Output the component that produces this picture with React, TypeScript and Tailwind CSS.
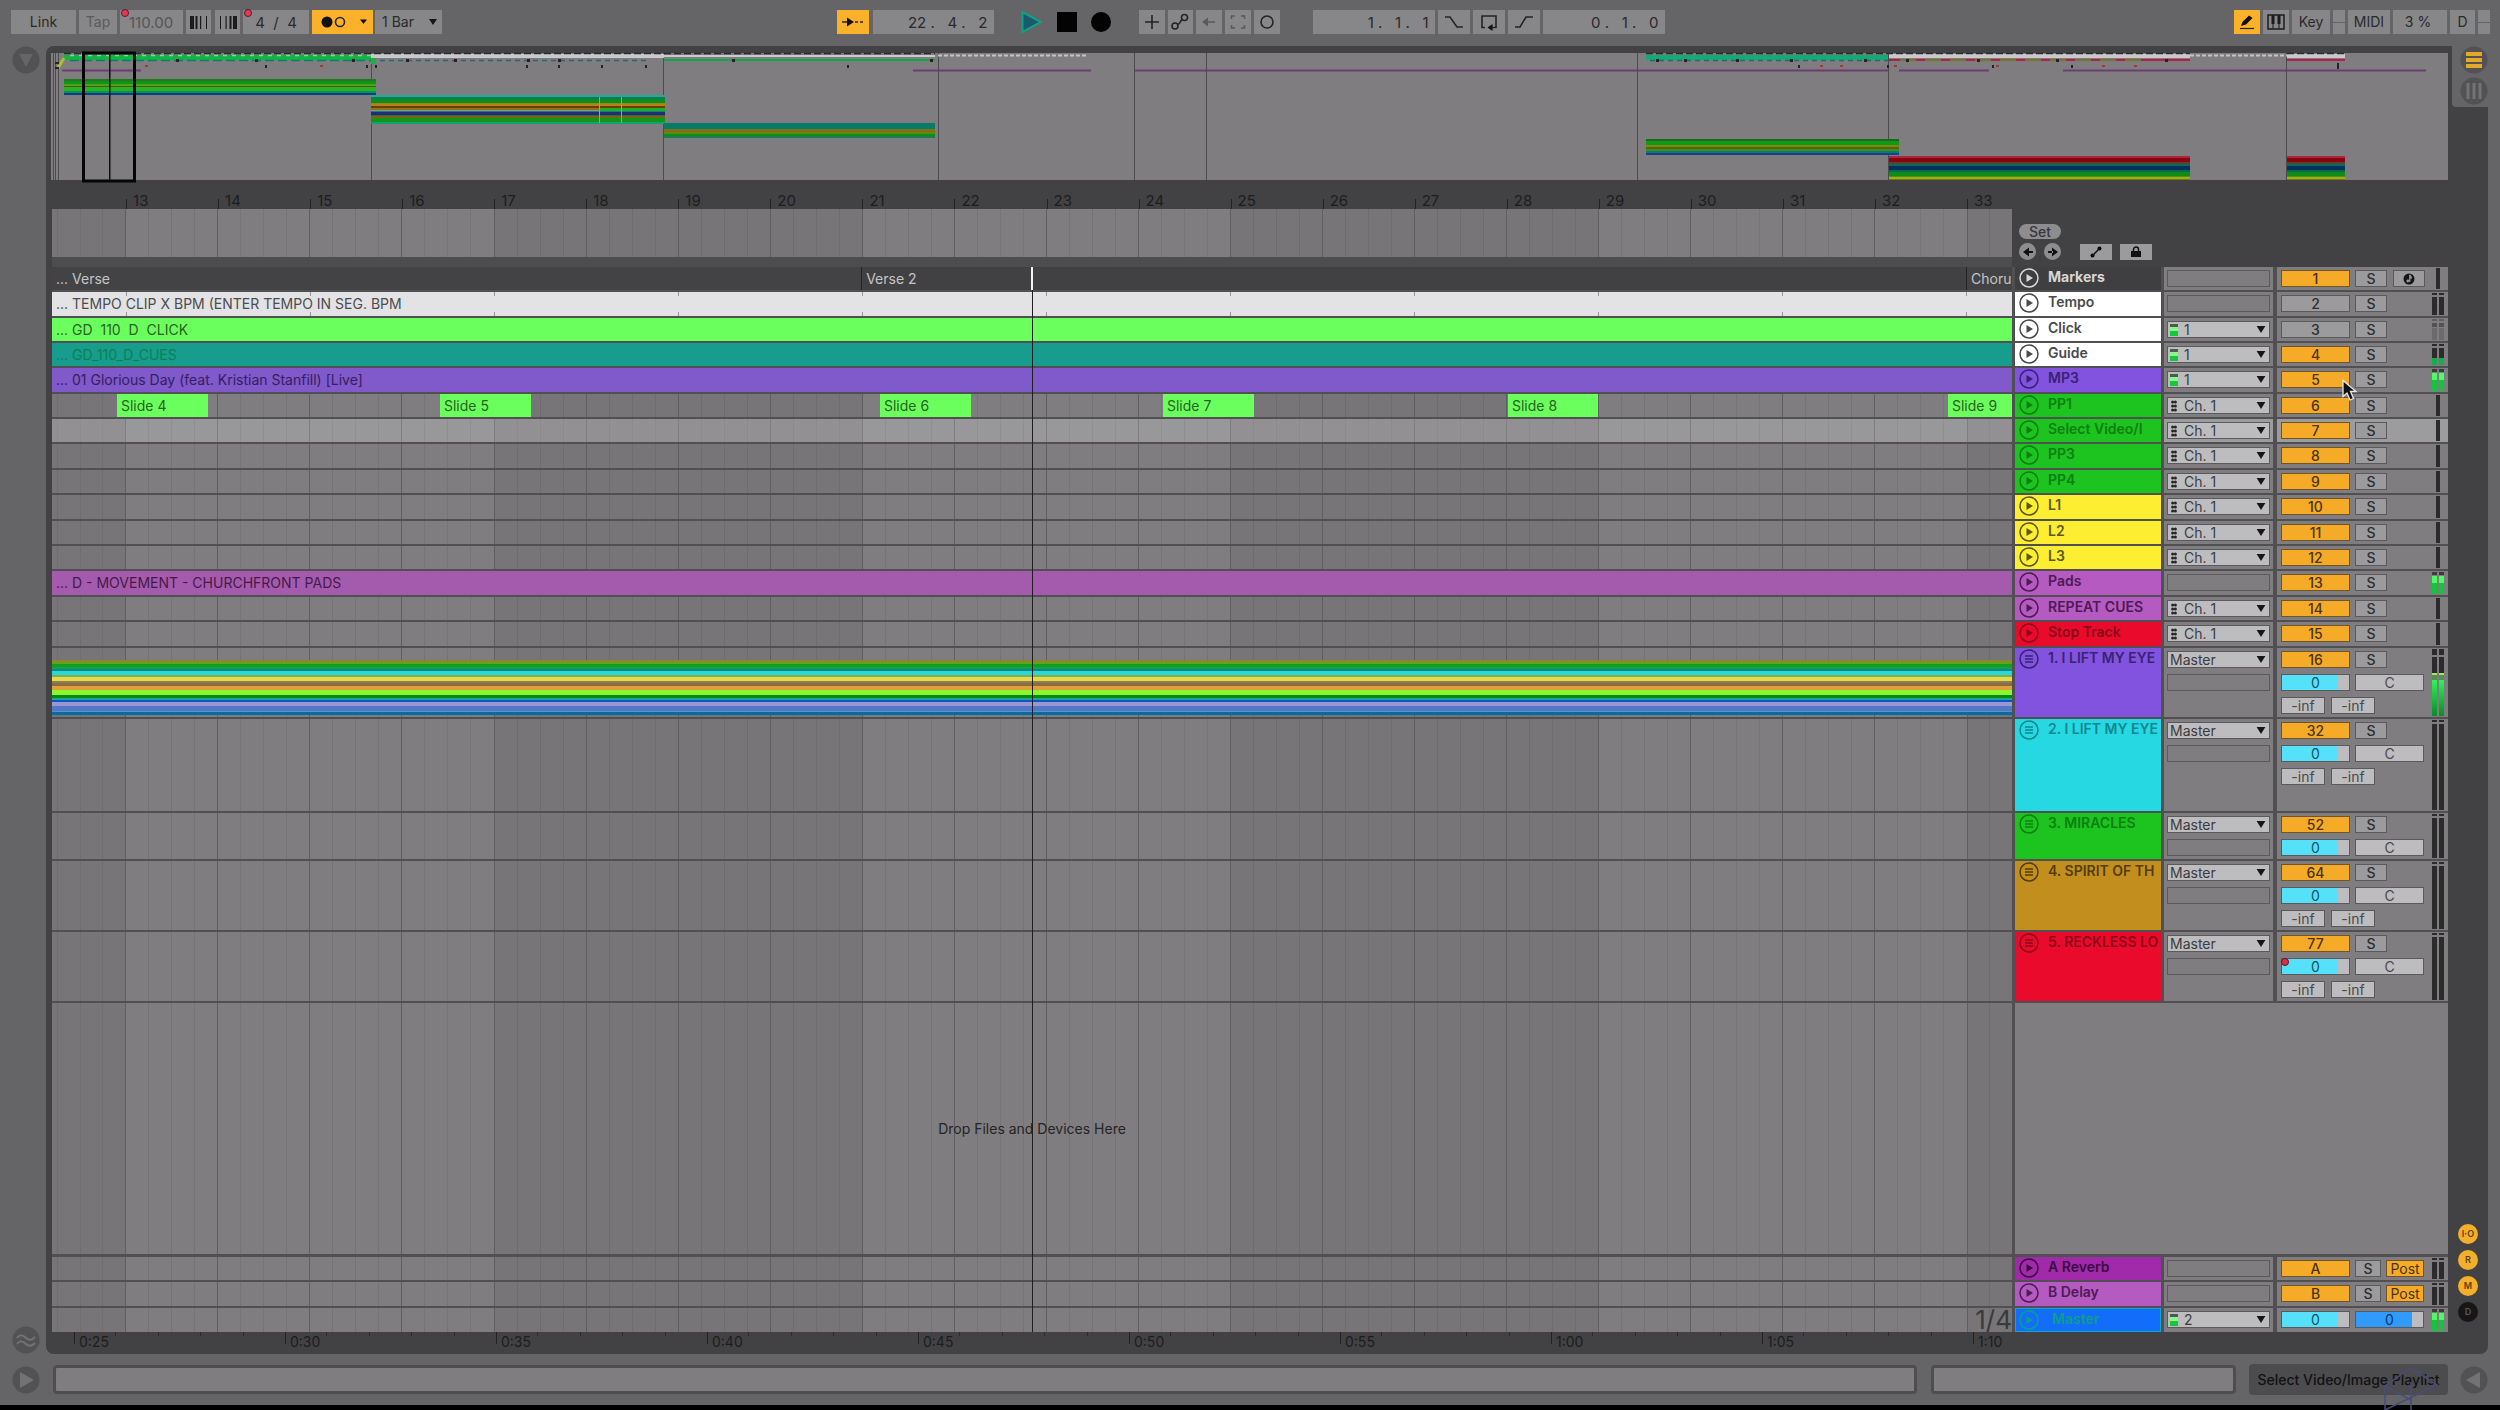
import React from "react";

type Tone = { bg: string; text: string };
type Meter = "line" | "dual" | "faint" | "low" | "high" | "group";

type Track = {
  name: string;
  tone: Tone;
  height: string;
  io: "none" | "audio" | "midi" | "group";
  number: string;
  active?: boolean;
  meter: Meter;
  selected?: boolean;
  sends?: boolean;
  automated?: boolean;
  icon: "play" | "group";
};

const tones: Record<string, Tone> = {
  dark: { bg: "bg-[#3f3f41]", text: "text-[#d6d6d6]" },
  white: { bg: "bg-white", text: "text-[#4a4a4c]" },
  purple: { bg: "bg-[#8253de]", text: "text-[#3a2272]" },
  green: { bg: "bg-[#1dc41f]", text: "text-[#0d7f13]" },
  yellow: { bg: "bg-[#fdee32]", text: "text-[#5c5716]" },
  pink: { bg: "bg-[#b45ac0]", text: "text-[#4d1b55]" },
  red: { bg: "bg-[#ea0b2c]", text: "text-[#8c0618]" },
  cyan: { bg: "bg-[#25d8e1]", text: "text-[#108791]" },
  ochre: { bg: "bg-[#c28f1f]", text: "text-[#553d08]" },
  magenta: { bg: "bg-[#a02aaa]", text: "text-[#3d0a42]" },
};

const tracks: Track[] = [
  { name: "Markers", tone: tones.dark, height: "h-[25px]", io: "none", number: "1", active: true, meter: "line", icon: "play" },
  { name: "Tempo", tone: tones.white, height: "h-[26px]", io: "none", number: "2", meter: "dual", icon: "play" },
  { name: "Click", tone: tones.white, height: "h-[25px]", io: "audio", number: "3", meter: "faint", icon: "play" },
  { name: "Guide", tone: tones.white, height: "h-[25px]", io: "audio", number: "4", active: true, meter: "low", icon: "play" },
  { name: "MP3", tone: tones.purple, height: "h-[26px]", io: "audio", number: "5", active: true, meter: "high", icon: "play" },
  { name: "PP1", tone: tones.green, height: "h-[25px]", io: "midi", number: "6", active: true, meter: "line", icon: "play" },
  { name: "Select Video/I", tone: tones.green, height: "h-[25px]", io: "midi", number: "7", active: true, meter: "line", selected: true, icon: "play" },
  { name: "PP3", tone: tones.green, height: "h-[26px]", io: "midi", number: "8", active: true, meter: "line", icon: "play" },
  { name: "PP4", tone: tones.green, height: "h-[25px]", io: "midi", number: "9", active: true, meter: "line", icon: "play" },
  { name: "L1", tone: tones.yellow, height: "h-[26px]", io: "midi", number: "10", active: true, meter: "line", icon: "play" },
  { name: "L2", tone: tones.yellow, height: "h-[25px]", io: "midi", number: "11", active: true, meter: "line", icon: "play" },
  { name: "L3", tone: tones.yellow, height: "h-[25px]", io: "midi", number: "12", active: true, meter: "line", icon: "play" },
  { name: "Pads", tone: tones.pink, height: "h-[26px]", io: "none", number: "13", active: true, meter: "high", icon: "play" },
  { name: "REPEAT CUES", tone: tones.pink, height: "h-[25px]", io: "midi", number: "14", active: true, meter: "line", icon: "play" },
  { name: "Stop Track", tone: tones.red, height: "h-[26px]", io: "midi", number: "15", active: true, meter: "line", icon: "play" },
  { name: "1. I LIFT MY EYE", tone: tones.purple, height: "h-[71px]", io: "group", number: "16", active: true, meter: "group", sends: true, icon: "group" },
  { name: "2. I LIFT MY EYE", tone: tones.cyan, height: "h-[94px]", io: "group", number: "32", active: true, meter: "dual", sends: true, icon: "group" },
  { name: "3. MIRACLES", tone: tones.green, height: "h-[48px]", io: "group", number: "52", active: true, meter: "dual", icon: "group" },
  { name: "4. SPIRIT OF TH", tone: tones.ochre, height: "h-[71px]", io: "group", number: "64", active: true, meter: "dual", sends: true, icon: "group" },
  { name: "5. RECKLESS LO", tone: tones.red, height: "h-[71px]", io: "group", number: "77", active: true, meter: "dual", sends: true, automated: true, icon: "group" },
];

/* ---------- time grid ---------- */

const bars = Array.from({ length: 20 }, (_, i) => 13 + i);

function TimeGrid() {
  return (
    <div className="flex h-full w-full" aria-hidden="true">
      <div className="flex grow-[74] basis-0 bg-[#777578]">
        <div className="grow-[5] basis-0" />
        {[0, 1, 2].map((b) => (
          <div key={b} className="grow-[23] basis-0 border-l border-[#706e71]" />
        ))}
      </div>
      {bars.map((bar) => {
        const light = Math.floor((bar - 13) / 4) % 2 === 0;
        return (
          <div
            key={bar}
            className={`flex grow-[92] basis-0 border-l border-[#5f5e60] ${light ? "bg-[#7f7d80]" : "bg-[#777578]"}`}
          >
            <div className="grow basis-0" />
            {[0, 1, 2].map((b) => (
              <div key={b} className={`grow basis-0 border-l ${light ? "border-[#757376]" : "border-[#6e6c6f]"}`} />
            ))}
          </div>
        );
      })}
      <div className="flex grow-[45] basis-0 border-l border-[#5f5e60] bg-[#777578]">
        <div className="grow basis-0" />
        <div className="grow basis-0 border-l border-[#6e6c6f]" />
      </div>
    </div>
  );
}

function BarRuler() {
  return (
    <div className="flex h-[29px] items-end text-[15px] leading-none text-[#1d1d1e]">
      <div className="grow-[74] basis-0" />
      {bars.map((bar) => (
        <div key={bar} className="flex h-5 min-w-0 grow-[92] basis-0 items-end">
          <span className="h-2.5 w-px bg-[#222]" />
          <span className="pb-px pl-1.5">{bar}</span>
        </div>
      ))}
      <div className="flex h-5 min-w-0 grow-[45] basis-0 items-end">
        <span className="h-2.5 w-px bg-[#222]" />
        <span className="pb-px pl-1.5">33</span>
      </div>
    </div>
  );
}

const seconds = ["0:25", "0:30", "0:35", "0:40", "0:45", "0:50", "0:55", "1:00", "1:05"];

function TimeRuler() {
  return (
    <div className="flex h-[22px] items-start text-sm leading-none text-[#1d1d1e]">
      <div className="grow-[22] basis-0" />
      {seconds.map((s) => (
        <div key={s} className="flex min-w-0 grow-[211] basis-0">
          <div className="flex w-0 grow basis-0 items-start">
            <span className="h-3 w-px shrink-0 bg-[#222]" />
            <span className="pt-[3px] pl-1">{s}</span>
          </div>
          {[0, 1, 2, 3].map((t) => (
            <div key={t} className="h-1 grow basis-0 border-l border-[#2c2c2d]" />
          ))}
        </div>
      ))}
      <div className="flex min-w-0 grow-[39] basis-0 items-start">
        <span className="h-3 w-px shrink-0 bg-[#222]" />
        <span className="pt-[3px] pl-1">1:10</span>
      </div>
    </div>
  );
}

/* ---------- lanes ---------- */

type Segment = { span: number; label?: string; className?: string };

function Lane({ segments }: { segments: Segment[] }) {
  return (
    <div className="flex h-full">
      {segments.map((s, i) => (
        <div
          key={i}
          className={`flex min-w-0 basis-0 items-center whitespace-pre ${s.className ?? ""}`}
          style={{ flexGrow: s.span }}
        >
          {s.label && <span className="w-0 pl-1">{s.label}</span>}
        </div>
      ))}
    </div>
  );
}

const slide = "bg-[#6bff5e] text-[#27631f]";
const gap = (span: number): Segment => ({ span });

const lanes: Record<string, Segment[]> = {
  Markers: [
    { span: 810, label: "... Verse", className: "bg-[#434345] text-[#c4c4c4]" },
    { span: 1105, label: "Verse 2", className: "bg-[#414143] border-l border-[#222] text-[#c4c4c4]" },
    { span: 45, label: "Choru", className: "bg-[#434345] border-l border-[#222] text-[#c4c4c4]" },
  ],
  Click: [{ span: 1, label: "... GD  110  D  CLICK", className: "bg-[#6bff5e] text-[#27631f]" }],
  Guide: [{ span: 1, label: "... GD_110_D_CUES", className: "bg-[#179c8d] text-[#0c8252]" }],
  MP3: [{ span: 1, label: "... 01 Glorious Day (feat. Kristian Stanfill) [Live]", className: "bg-[#8059cb] text-[#35205f]" }],
  PP1: [
    gap(65),
    { span: 91, label: "Slide 4", className: slide },
    gap(232),
    { span: 91, label: "Slide 5", className: slide },
    gap(349),
    { span: 91, label: "Slide 6", className: slide },
    gap(192),
    { span: 91, label: "Slide 7", className: slide },
    gap(254),
    { span: 90, label: "Slide 8", className: slide },
    gap(350),
    { span: 64, label: "Slide 9", className: slide },
  ],
  Pads: [{ span: 1, label: "... D - MOVEMENT - CHURCHFRONT PADS", className: "bg-[#a55bad] text-[#451a4a]" }],
};

function TempoLane() {
  return (
    <div className="relative flex h-full items-center bg-[#e3e2e5] pl-1 text-[#4c4c4e]">
      <div className="absolute inset-0 flex flex-col justify-between" aria-hidden="true">
        {[0, 1].map((row) => (
          <div key={row} className="flex h-1">
            <div className="grow-[74] basis-0" />
            {Array.from({ length: 10 }, (_, i) => (
              <div key={i} className="grow-[184] basis-0 border-l border-[#9a999c]" />
            ))}
            <div className="grow-[45] basis-0 border-l border-[#9a999c]" />
          </div>
        ))}
      </div>
      <span className="relative">... TEMPO CLIP X BPM (ENTER TEMPO IN SEG. BPM</span>
    </div>
  );
}

function GroupLane() {
  return (
    <div className="flex h-full flex-col pt-3" aria-hidden="true">
      <div className="h-[2px] bg-[#93822f]" />
      <div className="h-[2px] bg-[#5fa41d]" />
      <div className="h-[3px] bg-[#0fa01c]" />
      <div className="h-[2px] bg-[#1b9c55]" />
      <div className="h-[2px] bg-[#0c8583]" />
      <div className="h-[4px] bg-[#26dbd1]" />
      <div className="h-[2px] bg-[#8aa564]" />
      <div className="h-[4px] bg-[#e4db45]" />
      <div className="h-[2px] bg-[#8d7d52]" />
      <div className="h-[3px] bg-[#8f6845]" />
      <div className="h-[4px] bg-[#dba23c]" />
      <div className="h-[5px] bg-[#8df52c]" />
      <div className="h-[3px] bg-[#058a10]" />
      <div className="h-[2px] bg-[#22a09f]" />
      <div className="h-[2px] bg-[#0a58c4]" />
      <div className="h-[4px] bg-[#9a97cf]" />
      <div className="h-[5px] bg-[#5674c8]" />
      <div className="h-[1px] bg-[#4c9cc0]" />
      <div className="h-[3px] bg-[#066b9f]" />
    </div>
  );
}

function LaneContent({ track }: { track: Track }) {
  if (track.name === "Tempo") return <TempoLane />;
  if (track.number === "16") return <GroupLane />;
  const segments = lanes[track.name];
  return segments ? <Lane segments={segments} /> : null;
}

/* ---------- track controls ---------- */

function HeaderIcon({ kind }: { kind: "play" | "group" }) {
  return (
    <svg viewBox="0 0 20 20" className="size-5 shrink-0" fill="none" stroke="currentColor" strokeWidth="1.5">
      <circle cx="10" cy="10" r="9" />
      {kind === "play" ? <path d="M7.5 6v8l6.5-4z" fill="currentColor" stroke="none" /> : <path d="M6 7h8M6 10h8M6 13h8" />}
    </svg>
  );
}

function TrackHeader({ name, tone, icon, bold }: { name: string; tone: Tone; icon: "play" | "group"; bold?: boolean }) {
  return (
    <div className={`mr-[3px] flex w-[146px] shrink-0 items-start gap-[9px] pt-px pl-1 ${tone.bg} ${tone.text}`}>
      <button aria-label={`Unfold ${name}`} className="flex">
        <HeaderIcon kind={icon} />
      </button>
      <span className={`text-sm leading-[18px] whitespace-nowrap ${bold ? "font-bold" : "font-semibold"}`}>{name}</span>
    </div>
  );
}

function Caret() {
  return (
    <svg viewBox="0 0 10 8" className="pointer-events-none absolute top-1 right-[3px] h-[7px] w-2.5" fill="#161616">
      <path d="M0 0h10L5 8z" />
    </svg>
  );
}

function RouteSelect({ kind, value, label }: { kind: "audio" | "midi" | "group"; value: string; label: string }) {
  return (
    <div className="relative h-[17px] border border-[#5a595b] bg-[#bdbcbe]">
      {kind === "audio" && (
        <span className="absolute top-[2px] left-[2px] flex h-3 w-2 flex-col" aria-hidden="true">
          <span className="h-[3px] bg-[#4b5b4c]" />
          <span className="h-[4px] bg-[#8cf58e]" />
          <span className="h-[5px] bg-[#18c63c]" />
        </span>
      )}
      {kind === "midi" && (
        <svg viewBox="0 0 6 12" className="absolute top-[2px] left-[3px] h-3 w-1.5" fill="#262626">
          <circle cx="1.6" cy="2" r="1.5" />
          <circle cx="4.4" cy="2" r="1.5" />
          <circle cx="1.6" cy="6" r="1.5" />
          <circle cx="4.4" cy="6" r="1.5" />
          <circle cx="1.6" cy="10" r="1.5" />
          <circle cx="4.4" cy="10" r="1.5" />
        </svg>
      )}
      <select
        aria-label={label}
        className={`block h-full w-full appearance-none bg-transparent text-sm leading-[15px] text-[#3c3c3e] outline-none ${kind === "group" ? "pl-0.5" : "pl-4"}`}
      >
        <option>{value}</option>
      </select>
      <Caret />
    </div>
  );
}

function EmptySlot() {
  return <div className="h-[17px] border border-[#5a595b]" />;
}

function IoCell({ kind, name, lit }: { kind: Track["io"]; name: string; lit?: boolean }) {
  return (
    <div className={`mr-1 flex w-[109px] shrink-0 flex-col gap-1.5 px-[3px] pt-[3px] ${lit ? "bg-[#9c9b9e]" : "bg-[#7f7d80]"}`}>
      {kind === "none" && <EmptySlot />}
      {kind === "audio" && <RouteSelect kind="audio" value="1" label={`${name} output channel`} />}
      {kind === "midi" && <RouteSelect kind="midi" value="Ch. 1" label={`${name} channel`} />}
      {kind === "group" && (
        <>
          <RouteSelect kind="group" value="Master" label={`${name} output`} />
          <EmptySlot />
        </>
      )}
    </div>
  );
}

const box = "flex h-[17px] items-center justify-center border text-sm leading-none";

function Activator({ label, active }: { label: string; active?: boolean }) {
  return (
    <button
      aria-pressed={!!active}
      className={`${box} w-[69px] font-medium ${active ? "border-[#6f5527] bg-[#f5aa28] text-[#4a3513]" : "border-[#5a595b] bg-[#9b9a9d] text-[#2e2e2f]"}`}
    >
      {label}
    </button>
  );
}

function Solo({ narrow }: { narrow?: boolean }) {
  return <button className={`${box} border-[#5a595b] bg-[#9b9a9d] font-medium text-[#2e2e2f] ${narrow ? "w-[26px]" : "w-8"}`}>S</button>;
}

function LevelField({ label, tone = "cyan", automated }: { label: string; tone?: "cyan" | "blue"; automated?: boolean }) {
  return (
    <div className="relative flex h-[17px] w-[69px] border border-[#5a595b] bg-[#bdbcbe]">
      <div className={`w-[84%] ${tone === "cyan" ? "bg-[#56e1fb]" : "bg-[#2f9bff]"}`} />
      <input
        aria-label={label}
        defaultValue="0"
        className={`absolute inset-0 w-full bg-transparent text-center text-sm leading-none outline-none ${tone === "cyan" ? "text-[#17525d]" : "text-[#0c3868]"}`}
      />
      {automated && <span className="absolute -top-px -left-px size-2 rounded-full border border-[#5c1520] bg-[#d93246]" />}
    </div>
  );
}

function SmallField({ label, value, width }: { label: string; value: string; width: string }) {
  return (
    <input
      aria-label={label}
      defaultValue={value}
      className={`h-[17px] border border-[#5a595b] bg-[#bdbcbe] text-center text-sm leading-none text-[#4a4a4c] outline-none ${width}`}
    />
  );
}

function MeterColumn({ meter }: { meter: Meter }) {
  if (meter === "line") {
    return (
      <div className="flex w-3 justify-center" aria-hidden="true">
        <div className="w-1 bg-[#2b2b2c]" />
      </div>
    );
  }
  const column = () => {
    switch (meter) {
      case "faint":
        return (
          <>
            <div className="h-[2px] bg-[#5f5e60]" />
            <div className="mt-0.5 h-[4px] bg-[#525153]" />
            <div className="mt-px grow bg-[#6b6a6c]" />
          </>
        );
      case "low":
        return (
          <>
            <div className="h-[2px] bg-[#2b2b2c]" />
            <div className="mt-0.5 grow bg-[#2b2b2c]" />
            <div className="h-[7px] bg-[#12b04a]" />
          </>
        );
      case "high":
        return (
          <>
            <div className="h-[3px] bg-[#3b3b3c]" />
            <div className="mt-px h-[7px] bg-[#4dfb62]" />
            <div className="grow bg-[#12c53c]" />
          </>
        );
      case "group":
        return (
          <>
            <div className="h-[6px] bg-[#2b2b2c]" />
            <div className="mt-0.5 h-4 bg-[#2b2b2c]" />
            <div className="h-[2px] bg-[#9be86a]" />
            <div className="h-[5px] bg-[#5c8a55]" />
            <div className="grow bg-linear-to-b from-[#2ff557] to-[#0a8a2c]" />
          </>
        );
      default:
        return (
          <>
            <div className="h-[2px] bg-[#2b2b2c]" />
            <div className="mt-0.5 grow bg-[#2b2b2c]" />
          </>
        );
    }
  };
  return (
    <div className="flex w-3 gap-0.5" aria-hidden="true">
      <div className="flex grow flex-col">{column()}</div>
      <div className="flex grow flex-col">{column()}</div>
    </div>
  );
}

function MixerCell({ children, meter, lit }: { children: React.ReactNode; meter: Meter; lit?: boolean }) {
  return (
    <div className={`flex w-[171px] shrink-0 justify-between py-px pr-1 pl-1 ${lit ? "bg-[#9c9b9e]" : "bg-[#7f7d80]"}`}>
      <div className="flex flex-col gap-1.5 pt-[2px]">{children}</div>
      <MeterColumn meter={meter} />
    </div>
  );
}

function TrackRow({ track }: { track: Track }) {
  return (
    <div className={`flex border-b-2 border-[#504f51] ${track.height}`}>
      <div className={`mr-[3px] min-w-0 grow text-sm ${track.selected ? "bg-white/20" : ""}`}>
        <LaneContent track={track} />
      </div>
      <TrackHeader name={track.name} tone={track.tone} icon={track.icon} bold={track.name === "Markers"} />
      <IoCell kind={track.io} name={track.name} lit={track.selected} />
      <MixerCell meter={track.meter} lit={track.selected}>
        <div className="flex gap-[5px]">
          <Activator label={track.number} active={track.active} />
          <Solo />
          {track.name === "Markers" && (
            <button aria-label="Arm" className={`${box} ml-px w-8 border-[#5a595b] bg-[#9b9a9d]`}>
              <svg viewBox="0 0 12 12" className="size-3">
                <circle cx="6" cy="6" r="5.5" fill="#161616" />
                <path d="M6.2 2.2c2 .8 2.400 2.200 1.800 3.400M4.600 8.200h2.200V3" fill="none" stroke="#9b9a9d" strokeWidth="1.300" />
                <circle cx="4.800" cy="8" r="1.400" fill="#9b9a9d" />
              </svg>
            </button>
          )}
        </div>
        {track.io === "group" && (
          <div className="flex gap-[5px]">
            <LevelField label={`${track.name} volume`} automated={track.automated} />
            <SmallField label={`${track.name} pan`} value="C" width="w-[69px]" />
          </div>
        )}
        {track.sends && (
          <div className="flex gap-1.5">
            <SmallField label={`${track.name} send A`} value="-inf" width="w-11" />
            <SmallField label={`${track.name} send B`} value="-inf" width="w-11" />
          </div>
        )}
      </MixerCell>
    </div>
  );
}

function ReturnRow({ name, letter, tone, height }: { name: string; letter: string; tone: Tone; height: string }) {
  return (
    <div className={`flex border-b-2 border-[#504f51] ${height}`}>
      <div className="mr-[3px] grow" />
      <TrackHeader name={name} tone={tone} icon="play" />
      <IoCell kind="none" name={name} />
      <MixerCell meter="dual">
        <div className="flex gap-[5px]">
          <Activator label={letter} active />
          <Solo narrow />
          <button className={`${box} w-[38px] border-[#6f5527] bg-[#f5aa28] text-[#4a3513]`}>Post</button>
        </div>
      </MixerCell>
    </div>
  );
}

/* ---------- overview ---------- */

type Stripe = [number, number, string];

function Band({ x, w, stripes }: { x: number; w: number; stripes: Stripe[] }) {
  return (
    <g>
      {stripes.map(([y, h, fill]) => (
        <rect key={y} x={x} y={y} width={w} height={h} fill={fill} />
      ))}
    </g>
  );
}

const redBand: Stripe[] = [
  [156, 2, "#a8283c"], [158, 4, "#8a0412"], [162, 2, "#5a4330"], [164, 2, "#0e6a58"], [166, 4, "#04305c"],
  [170, 2, "#066a50"], [172, 4, "#0d8c18"], [176, 1, "#3a9a20"], [177, 2, "#aca518"], [179, 1, "#6a7a10"],
];

function Overview() {
  return (
    <svg viewBox="51 53 2397 127" preserveAspectRatio="none" className="block h-[127px] w-full overflow-visible bg-[#7f7d80]" role="img" aria-label="Arrangement overview">
      <g fill="#4c4b4d">
        {[53, 55, 58, 371, 663, 938, 1134, 1206, 1637, 1888, 2286].map((x) => (
          <rect key={x} x={x} y="53" width="1" height="127" />
        ))}
      </g>
      <Band x={64} w={312} stripes={[[79, 2, "#1f7a1c"], [81, 3, "#0f9418"], [84, 2, "#4fa01c"], [86, 1, "#5b5310"], [87, 4, "#25b51c"], [91, 2, "#0d8c6a"], [93, 2, "#0a3f80"]]} />
      <Band x={371} w={294} stripes={[[95, 2, "#2aa893"], [97, 2, "#0b7a60"], [99, 4, "#0e8c1a"], [103, 1, "#8e8a1a"], [104, 2, "#b87e1c"], [106, 2, "#6a3f08"], [108, 2, "#8f7412"], [110, 1, "#8f8d90"], [111, 1, "#1d7a80"], [112, 3, "#1f2c78"], [115, 1, "#2f6a40"], [116, 2, "#7a6410"], [118, 4, "#11961a"], [122, 2, "#14a070"]]} />
      <rect x="599" y="108" width="66" height="3" fill="#1fae20" />
      <rect x="599" y="97" width="1" height="26" fill="#85b94a" />
      <rect x="621" y="97" width="1" height="26" fill="#85b94a" />
      <Band x={664} w={271} stripes={[[123, 6, "#077a68"], [129, 1, "#6a7a20"], [130, 2, "#8c6a10"], [132, 2, "#5d8a10"], [134, 3, "#0a8f18"], [137, 1, "#2d6a90"]]} />
      <Band x={1646} w={253} stripes={[[139, 2, "#1a6a18"], [141, 4, "#0f9a18"], [145, 2, "#7a8a14"], [147, 2, "#6a5a0c"], [149, 2, "#2c9a18"], [151, 2, "#0c7a70"], [153, 2, "#1f3c90"]]} />
      <Band x={1889} w={301} stripes={redBand} />
      <Band x={2287} w={58} stripes={redBand} />

      <rect x="64" y="55" width="308" height="5" fill="#12b544" />
      <path d="M58 68l6-10" stroke="#a9c02c" strokeWidth="3" />
      <rect x="371" y="54" width="293" height="4" fill="#c9c9cb" />
      <rect x="371" y="58" width="5" height="6" fill="#12b544" />
      <rect x="664" y="55" width="271" height="2" fill="#c9c9cb" />
      <rect x="664" y="59" width="271" height="2" fill="#12a544" />
      <rect x="1646" y="55" width="242" height="5" fill="#10ac72" />
      <rect x="1889" y="54" width="301" height="4" fill="#c9c9cb" />
      <rect x="2287" y="54" width="58" height="4" fill="#c9c9cb" />
      <g strokeWidth="1.5" fill="none">
        <path d="M64 53.5H935M1646 53.5H2190M2287 53.5H2345" stroke="#2c2c2c" strokeDasharray="7 3" />
        <path d="M70 55.5H371" stroke="#7ddc96" strokeDasharray="4 5" />
        <path d="M938 55.5H1086M2190 55.5H2287" stroke="#c4c4c5" strokeWidth="2" strokeDasharray="4 2" />
        <path d="M70 60.5H371" stroke="#0f7d6a" strokeDasharray="9 4" />
        <path d="M380 60.5H650M1650 60.5H1888" stroke="#28647a" strokeDasharray="5 4" />
        <path d="M1889 60H2190M2287 60H2345" stroke="#b02048" strokeWidth="2" />
        <path d="M1900 60H2150" stroke="#75742a" strokeWidth="2" strokeDasharray="16 9" />
      </g>
      <path d="M62 70.5H141M913 70.5H1091M1135 70.5H1888M1899 70.5H1989M2063 70.5H2426" stroke="#6c3f74" strokeWidth="2" />
      <g fill="#2c2025">
        {[176, 255, 352, 406, 454, 527, 558, 732, 930, 1656, 1684, 1736, 1790, 1864, 1906, 1977, 2056, 2165].map((x) => (
          <rect key={x} x={x} y="59" width="3" height="3" />
        ))}
        {[265, 366, 375, 526, 558, 601, 645, 847, 1798, 1887, 1992, 2071].map((x) => (
          <rect key={x} x={x} y="65" width="2" height="3" />
        ))}
        <rect x="55" y="62" width="4" height="2" />
        <rect x="55" y="67" width="4" height="2" />
        <rect x="2337" y="63" width="2" height="6" />
      </g>
      <g fill="#9a3a3a">
        {[145, 320, 1820, 1840, 1894, 1996, 2102, 2134].map((x) => (
          <rect key={x} x={x} y="65" width="3" height="2" />
        ))}
      </g>
      <rect x="83.5" y="53" width="51" height="128" fill="none" stroke="#050505" strokeWidth="3" />
      <rect x="109" y="53" width="1.5" height="127" fill="#111" />
    </svg>
  );
}

/* ---------- toolbar ---------- */

const tile = "flex h-6 items-center justify-center text-sm text-[#2a2a2b]";
const plain = "bg-[#878688]";

function ToolButton({ label, width, children, lit }: { label: string; width: string; children: React.ReactNode; lit?: boolean }) {
  return (
    <button aria-label={label} className={`${tile} ${width} ${lit ? "bg-[#fcb12b]" : plain}`}>
      {children}
    </button>
  );
}

function Icon({ children, className, box: vb = "0 0 20 20" }: { children: React.ReactNode; className?: string; box?: string }) {
  return (
    <svg viewBox={vb} className={className ?? "size-5"} fill="none" stroke="#242425" strokeWidth="1.6">
      {children}
    </svg>
  );
}

function ArmDot() {
  return <span className="absolute -top-px left-px size-2 rounded-full border border-[#5a1c28] bg-[#e03a54]" aria-hidden="true" />;
}

function Toolbar() {
  return (
    <header className="grid h-[46px] grid-cols-[1fr_auto_1fr] items-start pt-2.5 pr-2.5 pl-[11px]">
      <div className="flex gap-[3px]">
        <button className={`${tile} ${plain} w-[65px]`}>Link</button>
        <button className={`${tile} ${plain} w-[38px] text-[#5b5b5d]!`}>Tap</button>
        <label className="relative">
          <input aria-label="Tempo" defaultValue="110.00" className={`block h-6 w-[63px] ${plain} pl-[9px] text-[15px] text-[#555557] outline-none`} />
          <ArmDot />
        </label>
        <div className="flex gap-1">
          <ToolButton label="Nudge down" width="w-[25px]">
            <svg viewBox="0 0 18 13" className="h-[13px] w-[18px]" fill="#1c1c1c">
              <path d="M0 0h4v13H0zM5.500 0h2v13h-2zM10 0h1.200v13H10zM16 0h1v13h-1z" />
            </svg>
          </ToolButton>
          <ToolButton label="Nudge up" width="w-[25px]">
            <svg viewBox="0 0 18 13" className="h-[13px] w-[18px]" fill="#1c1c1c">
              <path d="M1 0h1v13H1zM6.500 0h1.200v13H6.500zM10.500 0h2v13h-2zM14 0h4v13h-4z" />
            </svg>
          </ToolButton>
        </div>
        <label className="relative">
          <input aria-label="Time signature" defaultValue="4  /  4" className={`block h-6 w-[66px] ${plain} text-center text-[15px] whitespace-pre text-[#2a2a2b] outline-none`} />
          <ArmDot />
        </label>
        <ToolButton label="Metronome" width="w-[61px]" lit>
          <Icon box="0 0 50 14" className="h-3.5 w-[50px]">
            <circle cx="9" cy="7" r="5.500" fill="#111" stroke="none" />
            <circle cx="22" cy="7" r="4.500" />
            <path d="M42 4.500h7l-3.500 4.500z" fill="#111" stroke="none" />
          </Icon>
        </ToolButton>
        <div className="relative -ml-px">
          <select aria-label="Quantization" className={`block h-6 w-[67px] appearance-none ${plain} pl-[7px] text-sm text-[#2a2a2b] outline-none`}>
            <option>1 Bar</option>
          </select>
          <svg viewBox="0 0 8 6" className="pointer-events-none absolute top-[9px] right-[5px] h-1.5 w-2" fill="#161616">
            <path d="M0 0h8L4 6z" />
          </svg>
        </div>
      </div>

      <div className="flex">
        <ToolButton label="Follow" width="w-8" lit>
          <Icon box="0 0 24 12" className="h-3 w-6">
            <path d="M1 6h6M14 6h3M19 6h3" />
            <path d="M6 1.500v9l7-4.500z" fill="#111" stroke="none" />
          </Icon>
        </ToolButton>
        <input aria-label="Arrangement position" defaultValue="22 .   4 .   2" className={`ml-1 h-6 w-[121px] ${plain} pr-1.5 text-right text-[15px] text-[#2a2a2b] outline-none`} />
        <div className="ml-[27px] flex items-center gap-3.5">
          <button aria-label="Play">
            <svg viewBox="0 0 22 22" className="size-[22px]">
              <path d="M1.500 1v20L20 11z" fill="#1a5a70" stroke="#10a183" strokeWidth="2" />
            </svg>
          </button>
          <button aria-label="Stop" className="size-5 bg-[#030303]" />
          <button aria-label="Record" className="size-5 rounded-full bg-[#030303]" />
        </div>
        <div className="ml-7 flex gap-[3px]">
          <ToolButton label="Overdub" width="w-[26px]"><Icon><path d="M10 3v14M3 10h14" /></Icon></ToolButton>
          <ToolButton label="Automation arm" width="w-[25px]">
            <Icon><circle cx="5" cy="14" r="3" /><circle cx="14.500" cy="5.500" r="3" /><path d="M7.500 12.500c4-1 2-4 5-5" /></Icon>
          </ToolButton>
          <ToolButton label="Re-enable automation" width="w-[26px]">
            <svg viewBox="0 0 20 20" className="size-5" fill="#5a5a5c"><path d="M3 10l6-4.500v9zM8 9.200h8v1.600H8z" /></svg>
          </ToolButton>
          <ToolButton label="Capture" width="w-[26px]">
            <svg viewBox="0 0 20 20" className="size-5" fill="none" stroke="#5a5a5c" strokeWidth="1.600">
              <path d="M3.500 7V4H7M13 4h3.500v3M16.500 13v3H13M7 16H3.500v-3" />
            </svg>
          </ToolButton>
          <ToolButton label="Session record" width="w-[26px]"><Icon><circle cx="10" cy="10" r="6" /></Icon></ToolButton>
        </div>
        <div className="ml-[33px] flex gap-[3px]">
          <input aria-label="Loop start" defaultValue="1 .   1 .   1" className={`h-6 w-[122px] ${plain} pr-1.5 text-right text-[15px] text-[#2a2a2b] outline-none`} />
          <ToolButton label="Punch in" width="w-8"><Icon><path d="M1 5h5l7 10h6" /></Icon></ToolButton>
          <ToolButton label="Loop" width="w-8">
            <Icon><path d="M6 15.500H3V4h14v11.500h-5" /><path d="M13.500 12v7l-5-3.500z" fill="#111" stroke="none" /></Icon>
          </ToolButton>
          <ToolButton label="Punch out" width="w-8"><Icon><path d="M1 15h5l6-10h7" /></Icon></ToolButton>
          <input aria-label="Loop length" defaultValue="0 .   1 .   0" className={`h-6 w-[122px] ${plain} pr-1.5 text-right text-[15px] text-[#2a2a2b] outline-none`} />
        </div>
      </div>

      <div className="flex justify-end gap-[3px]">
        <ToolButton label="Draw mode" width="w-[26px]" lit>
          <Icon><path d="M4 14l1.500-4L12 3.500l3.500 2.500L9 12.500z" fill="#111" stroke="none" /><path d="M3 16.500h14" strokeWidth="1.200" /></Icon>
        </ToolButton>
        <ToolButton label="Computer keyboard" width="w-[26px]">
          <svg viewBox="0 0 18 16" className="h-4 w-[18px]">
            <path d="M1 1h16v14H1z" fill="none" stroke="#1c1c1c" strokeWidth="1.500" />
            <path d="M4.500 1h3v9h-3zM10.500 1h3v9h-3z" fill="#1c1c1c" />
            <path d="M6 9v6M12 9v6" stroke="#1c1c1c" />
          </svg>
        </ToolButton>
        <button className={`${tile} ${plain} w-[38px]`}>Key</button>
        <div className={`${tile} ${plain} w-3`}><span className="h-px w-full bg-[#636365]" /></div>
        <button className={`${tile} ${plain} w-[42px]`}>MIDI</button>
        <div className={`${tile} ${plain} w-[54px] pr-1`}>3 %</div>
        <button className={`${tile} ${plain} w-[25px]`}>D</button>
        <div className={`${tile} ${plain} w-3`}><span className="h-px w-full bg-[#636365]" /></div>
      </div>
    </header>
  );
}

/* ---------- page ---------- */

function RoundButton({ label, children }: { label: string; children: React.ReactNode }) {
  return (
    <button aria-label={label} className="flex size-7 items-center justify-center">
      <svg viewBox="0 0 28 28" className="size-7">
        <circle cx="14" cy="14" r="13.500" fill="#525153" />
        {children}
      </svg>
    </button>
  );
}

const sectionToggles = [
  { label: "I·O", on: true },
  { label: "R", on: true },
  { label: "M", on: true },
  { label: "D", on: false },
];

export default function App() {
  return (
    <div className="relative flex min-h-screen flex-col border-b-[5px] border-black bg-[#656466] font-['Inter','Liberation_Sans',sans-serif]">
      <Toolbar />

      <main className="flex grow">
        <div className="flex w-[46px] shrink-0 flex-col items-start justify-between pl-3">
          <RoundButton label="Show browser"><path d="M7 8h14l-7 13z" fill="#656466" /></RoundButton>
          <RoundButton label="Groove pool">
            <path d="M5 12c3-4 6-3 9 0s6 2 9-1M5 18c3-4 6-3 9 0s6 2 9-1" fill="none" stroke="#727173" strokeWidth="2" />
          </RoundButton>
        </div>

        <div className="mr-3 flex grow flex-col rounded-lg bg-[#424244]">
          <div className="flex">
            <div className="grow pt-[7px] pr-1 pl-[5px]">
              <Overview />
            </div>
            <div className="w-9 shrink-0 self-stretch">
              <div className="flex h-[61px] flex-col items-end gap-[3px] rounded-bl bg-[#656466]">
                <RoundButton label="Arrangement view">
                  <path d="M6 8h16M6 14h16M6 20h16" stroke="#e3a92b" strokeWidth="4" />
                </RoundButton>
                <RoundButton label="Session view">
                  <path d="M8 6v16M14 6v16M20 6v16" stroke="#737274" strokeWidth="3" />
                </RoundButton>
              </div>
            </div>
          </div>

          <div className="flex grow">
            <div className="flex min-w-0 grow flex-col pl-1.5">
              <div className="flex">
                <div className="min-w-0 grow">
                  <BarRuler />
                  <div className="h-12"><TimeGrid /></div>
                  <div className="h-2.5 bg-[#4d4c4e]" />
                </div>
                <div className="flex w-[436px] shrink-0 flex-col gap-1 pt-[44px] pl-[7px]">
                  <button className="flex h-[15px] w-[42px] items-center justify-center rounded-full bg-[#8d8c8e] text-sm font-medium text-[#38383a]">Set</button>
                  <div className="flex items-center">
                    <button aria-label="Previous locator" className="flex size-[17px] items-center justify-center rounded-full bg-[#8d8c8e]">
                      <svg viewBox="0 0 12 12" className="size-3" fill="#111"><path d="M1 6l6-4.500v9zM6 5h5v2H6z" /></svg>
                    </button>
                    <button aria-label="Next locator" className="ml-2 flex size-[17px] items-center justify-center rounded-full bg-[#8d8c8e]">
                      <svg viewBox="0 0 12 12" className="size-3" fill="#111"><path d="M11 6L5 1.500v9zM1 5h5v2H1z" /></svg>
                    </button>
                    <button aria-label="Automation mode" className="ml-[19px] flex h-4 w-8 items-center justify-center bg-[#9b9a9d]">
                      <svg viewBox="0 0 12 12" className="size-3"><circle cx="2.500" cy="9.500" r="2" /><circle cx="9.500" cy="2.500" r="2" /><path d="M2.500 9.500l7-7" stroke="#111" strokeWidth="1.500" /></svg>
                    </button>
                    <button aria-label="Lock envelopes" className="ml-2 flex h-4 w-8 items-center justify-center bg-[#9b9a9d]">
                      <svg viewBox="0 0 12 12" className="size-3"><path d="M1 5h10v6H1z" fill="#111" /><path d="M3.500 6V3.500a2.500 2.500 0 0 1 5 0V6" fill="none" stroke="#111" strokeWidth="1.500" /></svg>
                    </button>
                  </div>
                </div>
              </div>

              <div className="relative flex grow flex-col bg-[#504f51]">
                <div className="absolute inset-y-0 right-[436px] left-0"><TimeGrid /></div>
                <div className="relative flex grow flex-col">
                  {tracks.map((track) => (
                    <TrackRow key={track.number} track={track} />
                  ))}
                  <div className="flex grow border-b-[3px] border-[#504f51]">
                    <div className="mr-[3px] flex grow items-center justify-center text-sm text-[#252526]">Drop Files and Devices Here</div>
                    <div className="w-[433px] shrink-0 bg-[#7f7d80]" />
                  </div>
                  <ReturnRow name="A Reverb" letter="A" tone={tones.magenta} height="h-[25px]" />
                  <ReturnRow name="B Delay" letter="B" tone={tones.pink} height="h-[26px]" />
                  <div className="flex h-6">
                    <div className="mr-[3px] flex grow items-center justify-end text-[26px] leading-none text-[#3a3a3b]">1/4</div>
                    <div className="mr-[3px] flex w-[146px] shrink-0 items-start gap-[9px] border border-[#12a9c4] bg-[#126dfb] pt-px pl-[3px] text-[#0aa08c]">
                      <button aria-label="Unfold Master" className="flex"><HeaderIcon kind="play" /></button>
                      <span className="pl-1 text-sm leading-[18px] font-semibold">Master</span>
                    </div>
                    <div className="mr-1 w-[109px] shrink-0 bg-[#7f7d80] px-[3px] pt-[3px]">
                      <RouteSelect kind="audio" value="2" label="Master output" />
                    </div>
                    <MixerCell meter="high">
                      <div className="flex gap-[5px]">
                        <LevelField label="Master volume" />
                        <LevelField label="Cue volume" tone="blue" />
                      </div>
                    </MixerCell>
                  </div>
                </div>
                <div className="pointer-events-none absolute inset-y-0 right-[436px] left-0 flex justify-center" aria-hidden="true">
                  <div className="flex w-0.5 flex-col">
                    <div className="h-[23px] bg-[#f1f1f1]" />
                    <div className="ml-px grow bg-[#1f1f20]" />
                  </div>
                </div>
              </div>

              <div className="mr-[436px]"><TimeRuler /></div>
            </div>

            <div className="flex w-10 shrink-0 flex-col items-center justify-end gap-[6px] pb-8">
              {sectionToggles.map((t) => (
                <button
                  key={t.label}
                  className={`flex size-5 items-center justify-center rounded-full text-[9px] font-semibold ${t.on ? "bg-[#f3ae2c] text-[#5c430f]" : "bg-[#161617] text-[#5a5a5c]"}`}
                >
                  {t.label}
                </button>
              ))}
            </div>
          </div>
        </div>
      </main>

      <footer className="relative flex h-[51px] shrink-0 items-center pr-3 pl-3">
        <RoundButton label="Show info"><path d="M8 6v16l14-8z" fill="#727173" /></RoundButton>
        <div className="ml-[13px] h-[29px] grow rounded-sm border-[3px] border-[#4e4d4f] bg-[#7f7d80]" />
        <div className="ml-[14px] h-[29px] w-[305px] rounded-sm border-[3px] border-[#4e4d4f] bg-[#7f7d80]" />
        <div className="mr-3 ml-[13px] flex h-[31px] w-[199px] items-center justify-center rounded-sm bg-[#4c4b4d] text-sm font-medium whitespace-nowrap text-[#121213]">
          Select Video/Image Playlist
        </div>
        <RoundButton label="Show device view"><path d="M20 6v16L6 14z" fill="#727173" /></RoundButton>
        <svg viewBox="0 0 60 44" className="pointer-events-none absolute right-[58px] -bottom-[5px] h-11 w-[60px]" fill="none" stroke="#4a4c78" strokeWidth="1.500" aria-hidden="true">
          <path d="M3 44V20L29 2l26 17L3 44M3 20l26 14V44M29 34V16" />
        </svg>
      </footer>

      <svg viewBox="0 0 16 22" className="pointer-events-none absolute top-[379px] left-[2342px] h-[23px] w-4" aria-hidden="true">
        <path d="M1 1v16l4-3.500 3 7 3.500-1.500-3-7H14z" fill="#111" stroke="#e8e8e8" strokeWidth="1.300" />
      </svg>
    </div>
  );
}
